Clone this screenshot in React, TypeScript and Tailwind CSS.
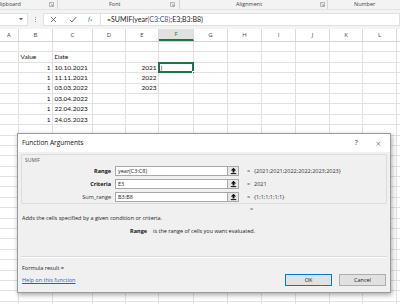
import React from "react";

const colW = [
  "w-[19px]",
  "w-[34px]",
  "w-[40px]",
  "w-[33px]",
  "w-[33px]",
  "w-[35px]",
  "w-[34px]",
  "w-[34px]",
  "w-[34px]",
  "w-[34px]",
  "w-[33px]",
  "w-[34px]",
  "w-[30px]",
];
const letters = ["A", "B", "C", "D", "E", "F", "G", "H", "I", "J", "K", "L", ""];

// sheet contents, keyed by row index then column index
const cells: Record<number, Record<number, { v: string; right?: boolean }>> = {
  1: { 1: { v: "Value" }, 2: { v: "Date" } },
  2: { 1: { v: "1", right: true }, 2: { v: "10.10.2021" }, 4: { v: "2021", right: true }, 5: { v: ")" } },
  3: { 1: { v: "1", right: true }, 2: { v: "11.11.2021" }, 4: { v: "2022", right: true } },
  4: { 1: { v: "1", right: true }, 2: { v: "03.03.2022" }, 4: { v: "2023", right: true } },
  5: { 1: { v: "1", right: true }, 2: { v: "03.04.2022" } },
  6: { 1: { v: "1", right: true }, 2: { v: "22.04.2023" } },
  7: { 1: { v: "1", right: true }, 2: { v: "24.05.2023" } },
};

const Launcher = () => (
  <svg width="5" height="5" viewBox="0 0 5 5" className="text-[#8a8a8a]">
    <path d="M0.5 0.5h4v4h-4z" fill="none" stroke="currentColor" strokeWidth="0.6" />
    <path d="M1.5 1.5L3.8 3.8M2.4 3.8h1.4V2.4" fill="none" stroke="currentColor" strokeWidth="0.6" />
  </svg>
);

const CollapseIcon = () => (
  <svg width="7" height="8" viewBox="0 0 7 8">
    <path d="M3.5 0.8L6.2 3.6H4.4V5.4H2.6V3.6H0.8z" fill="#111" />
    <path d="M0.8 6.6h5.4" stroke="#111" strokeWidth="1" />
  </svg>
);

const ArgRow = ({ label, bold, input, value }: { label: string; bold?: boolean; input: string; value: string }) => (
  <div className="flex items-center h-[10px]">
    <div className={`w-[93px] text-right pr-[4px] ${bold ? "font-bold text-[#111]" : "text-[#333]"}`}>{label}</div>
    <div className="w-[113px] h-[10px] bg-white border border-[#a8a8a8] flex items-center pl-[2px] text-[#222]">
      {input}
    </div>
    <div className="w-[11px] h-[10px] bg-[#e8e8e8] border border-[#a8a8a8] border-l-0 flex items-center justify-center">
      <CollapseIcon />
    </div>
    <div className="ml-[8px] w-[7px] text-[#666]">=</div>
    <div className="text-[#333]">{value}</div>
  </div>
);

export default function App() {
  const rows = Array.from({ length: 26 }, (_, i) => i);
  return (
    <div className="relative w-[400px] h-[304px] overflow-hidden bg-white font-['Open_Sans',sans-serif] select-none">
      {/* ribbon group labels */}
      <div className="h-[10px] bg-[#f3f3f3] flex items-center text-[5.5px] text-[#444] border-b border-[#e3e3e3]">
        <div className="w-[58px] flex items-center border-r border-[#d6d6d6] h-[9px]">
          <span className="ml-[-4px]">Clipboard</span>
          <span className="ml-auto mr-[3px] flex">
            <Launcher />
          </span>
        </div>
        <div className="w-[122px] flex items-center border-r border-[#d6d6d6] h-[9px]">
          <span className="ml-[51px]">Font</span>
          <span className="ml-auto mr-[4px] flex">
            <Launcher />
          </span>
        </div>
        <div className="w-[148px] flex items-center border-r border-[#d6d6d6] h-[9px]">
          <span className="ml-[56px]">Alignment</span>
          <span className="ml-auto mr-[2px] flex">
            <Launcher />
          </span>
        </div>
        <div className="flex-1 flex items-center h-[9px]">
          <span className="ml-[26px]">Number</span>
        </div>
      </div>

      {/* formula bar */}
      <div className="h-[19px] bg-[#f3f3f3] flex items-start pt-[3px]">
        <div className="w-[28px] h-[13px] bg-white border border-[#e0e0e0] border-l-0 flex items-center justify-end pr-[4px]">
          <svg width="4" height="3" viewBox="0 0 4 3">
            <path d="M0 0h4L2 2.5z" fill="#666" />
          </svg>
        </div>
        <div className="w-[15px] h-[13px] flex flex-col items-center justify-center gap-[1px]">
          <span className="w-[1px] h-[1px] bg-[#999]" />
          <span className="w-[1px] h-[1px] bg-[#999]" />
          <span className="w-[1px] h-[1px] bg-[#999]" />
        </div>
        <div className="w-[57px] h-[13px] bg-white border-y border-l border-[#e0e0e0] flex items-center">
          <svg width="7" height="7" viewBox="0 0 7 7" className="ml-[6px]">
            <path d="M1 1L6 6M6 1L1 6" stroke="#555" strokeWidth="0.8" />
          </svg>
          <svg width="8" height="7" viewBox="0 0 8 7" className="ml-[12px]">
            <path d="M0.8 3.8L3 6L7.2 1" fill="none" stroke="#555" strokeWidth="0.8" />
          </svg>
          <span className="ml-[11px] text-[7px] italic font-['Liberation_Serif',serif] text-[#2d8a4e]">
            f<span className="text-[5px]">x</span>
          </span>
        </div>
        <div className="flex-1 h-[13px] bg-white border border-[#e0e0e0] flex items-center pl-[6px] text-[7px] text-[#222] font-['Lato',sans-serif]">
          <span>
            =SUMIF(year<span className="text-[#d9382c]">(</span>
            <span className="text-[#2e4f9e]">C3:C8</span>
            <span className="text-[#d9382c]">)</span>;E3;B3:B8)
          </span>
        </div>
      </div>

      {/* column headers */}
      <div className="flex h-[13px] bg-white border-b border-[#d4d4d4]">
        {colW.map((w, i) => (
          <div
            key={i}
            className={`${w} shrink-0 flex items-center justify-center text-[6px] border-r border-[#dadada] ${
              i === 5 ? "bg-[#e1e1e1] text-[#217346] border-b-2 border-b-[#217346]" : "text-[#444]"
            }`}
          >
            {letters[i]}
          </div>
        ))}
      </div>

      {/* grid */}
      <div className="font-['Lato',sans-serif] text-[6.5px] text-[#111]">
        {rows.map((r) => (
          <div key={r} className="flex h-[10.4px]">
            {colW.map((w, c) => {
              const cell = cells[r]?.[c];
              const sel = r === 2 && c === 5;
              return (
                <div
                  key={c}
                  className={`${w} shrink-0 relative flex items-center px-[1.5px] border-r border-b border-[#e1e1e1] ${
                    cell?.right ? "justify-end" : ""
                  }`}
                >
                  {cell?.v}
                  {sel && (
                    <div className="absolute -left-[1px] -top-[1px] w-[36px] h-[11.4px] border-2 border-[#217346]">
                      <div className="absolute -right-[3px] -bottom-[3px] w-[3px] h-[3px] bg-[#217346] border border-white" />
                    </div>
                  )}
                </div>
              );
            })}
          </div>
        ))}
      </div>

      {/* Function Arguments dialog */}
      <div className="absolute left-[17px] top-[133px] w-[374px] h-[160px] bg-[#f0f0f0] border border-[#9a9a9a] shadow-[1px_2px_5px_rgba(0,0,0,0.35)] flex flex-col text-[5.5px] text-[#222]">
        <div className="h-[18px] bg-white flex items-center pl-[4px] pr-[9px] shrink-0">
          <span className="text-[6.5px] text-[#111]">Function Arguments</span>
          <span className="ml-auto text-[7px] text-[#333]">?</span>
          <span className="ml-[18px] text-[9px] font-light text-[#333] leading-none">×</span>
        </div>

        <div className="pl-[3px] pr-[3px] flex flex-col">
          <div className="mt-[2px] w-[366px] h-[50px] border border-[#dcdcdc] rounded-[2px] flex flex-col">
            <div className="pl-[3px] mt-[1px] h-[8px] text-[#555] text-[5px] leading-[8px]">SUMIF</div>
            <div className="mt-[2px] flex flex-col gap-[3px]">
              <ArgRow label="Range" bold input="year(C3:C8)" value="{2021;2021;2022;2022;2023;2023}" />
              <ArgRow label="Criteria" bold input="E3" value="2021" />
              <ArgRow label="Sum_range" input="B3:B8" value="{1;1;1;1;1;1}" />
            </div>
          </div>

          <div className="h-[10px] flex items-center pl-[229px] text-[#666]">=</div>
          <div className="h-[9px] flex items-center pl-[1px]">Adds the cells specified by a given condition or criteria.</div>
          <div className="mt-[4px] h-[9px] flex items-center">
            <span className="w-[126px] text-right font-bold text-[#111]">Range</span>
            <span className="ml-[6px]">is the range of cells you want evaluated.</span>
          </div>

          <div className="mt-[20px] h-[2px] border-t border-[#dadada] border-b border-b-white w-[366px]" />

          <div className="mt-[6px] h-[9px] flex items-center pl-[1px]">Formula result =</div>

          <div className="mt-[1px] flex items-center">
            <span className="pl-[1px] text-[#1a66c7] underline">Help on this function</span>
            <button
              type="button"
              className="ml-auto w-[47px] h-[12px] bg-[#e1e1e1] border border-[#0078d7] flex items-center justify-center text-[5.5px] text-[#222]"
            >
              OK
            </button>
            <button
              type="button"
              className="ml-[7px] mr-[1px] w-[47px] h-[12px] bg-[#e1e1e1] border border-[#adadad] flex items-center justify-center text-[5.5px] text-[#222]"
            >
              Cancel
            </button>
          </div>
        </div>
      </div>
    </div>
  );
}
